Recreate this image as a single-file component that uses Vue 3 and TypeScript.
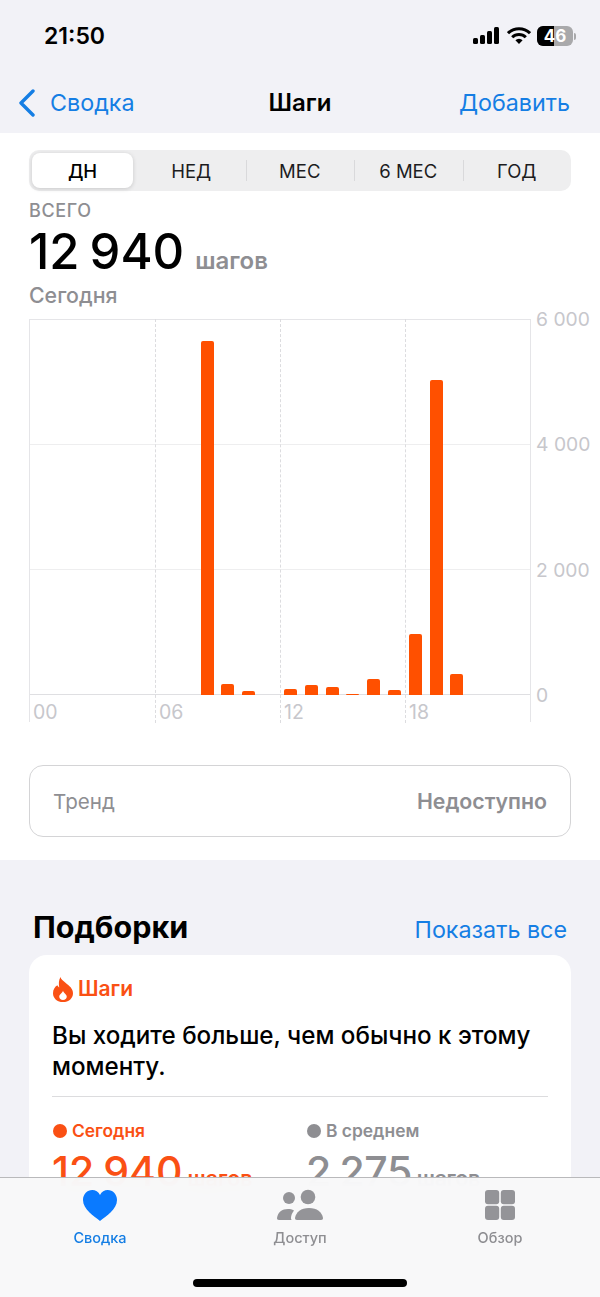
<template>
  <div class="phone">
    <header class="top">
      <div class="status">
        <span class="time">21:50</span>
        <div class="status-icons">
          <svg width="27" height="18" viewBox="0 0 27 18">
            <rect x="0" y="11" width="5" height="6" rx="1.5" />
            <rect x="7" y="8" width="5" height="9" rx="1.5" />
            <rect x="14" y="4" width="5" height="13" rx="1.5" />
            <rect x="21" y="0" width="5" height="17" rx="1.5" />
          </svg>
          <svg class="wifi" width="24" height="18" viewBox="0 0 24 18">
            <path d="M1 6.2a15.6 15.6 0 0 1 22 0" fill="none" stroke="#000" stroke-width="3" />
            <path d="M5.2 10.2a9.6 9.6 0 0 1 13.6 0" fill="none" stroke="#000" stroke-width="3" />
            <path d="M8.4 13.2 12 17l3.600-3.800a5 5 0 0 0-7.200 0z" />
          </svg>
          <div class="battery"><span class="battery-fill"></span><span class="battery-num">46</span></div>
          <span class="battery-cap"></span>
        </div>
      </div>
      <nav class="nav">
        <div class="back">
          <svg width="18" height="28" viewBox="0 0 18 28">
            <path d="M15 2 3 14l12 12" fill="none" stroke="#157ee4" stroke-width="3.400" stroke-linecap="round" stroke-linejoin="round" />
          </svg>
          <span>Сводка</span>
        </div>
        <div class="nav-title">Шаги</div>
        <div class="nav-add">Добавить</div>
      </nav>
    </header>

    <section class="sheet">
      <div class="segments">
        <div
          v-for="(s, i) in segments"
          :key="s"
          class="segment"
          :class="{ active: i === 0, sep: i > 1 }"
        >
          {{ s }}
        </div>
      </div>

      <div class="total-label">ВСЕГО</div>
      <div class="total">
        <span class="total-num">12 940</span>
        <span class="total-unit">шагов</span>
      </div>
      <div class="total-date">Сегодня</div>

      <div class="chart">
        <div class="plot">
          <div class="rows">
            <div class="grid-row"></div>
            <div class="grid-row"></div>
            <div class="grid-row"></div>
          </div>
          <div class="cols">
            <div v-for="h in hours" :key="h" class="col">{{ h }}</div>
          </div>
          <div class="bars">
            <div v-for="(b, i) in bars" :key="i" class="slot">
              <div v-if="b" class="bar" :style="{ height: b + 'px' }"></div>
            </div>
          </div>
        </div>
        <div class="y-axis">
          <span>6 000</span>
          <span>4 000</span>
          <span>2 000</span>
          <span>0</span>
        </div>
      </div>

      <div class="trend">
        <span>Тренд</span>
        <span class="trend-value">Недоступно</span>
      </div>
    </section>

    <section class="picks">
      <div class="picks-head">
        <h2>Подборки</h2>
        <span class="show-all">Показать все</span>
      </div>
      <div class="card">
        <div class="card-title">
          <svg width="20" height="25" viewBox="0 0 16 24" preserveAspectRatio="none">
            <path
              fill-rule="evenodd"
              d="M6 0c.5 2.500 2 3.500 4 5.500 3 3 6 5.500 6 10C16 20.500 12.500 24 8 24S0 20.500 0 15.500C0 12 1.500 9.500 3.500 8c.5 1 .8 1.500 1.500 2C4.500 6.500 4.500 3 6 0zM8 13c0 2-3 3.500-3 6 0 2 1.300 3 3 3s3-1 3-3c0-2.500-3-4-3-6z"
            />
          </svg>
          <span>Шаги</span>
        </div>
        <p class="card-text">Вы ходите больше, чем обычно к этому моменту.</p>
        <div class="compare">
          <div class="metric today">
            <div class="metric-label"><i class="dot"></i>Сегодня</div>
            <div class="metric-value">12 940<small>шагов</small></div>
          </div>
          <div class="metric avg">
            <div class="metric-label"><i class="dot"></i>В среднем</div>
            <div class="metric-value">2 275<small>шагов</small></div>
          </div>
        </div>
      </div>
    </section>

    <footer class="tabbar">
      <div class="tabs">
        <div class="tab current">
          <svg width="36" height="34" viewBox="0 0 36 34">
            <path d="M18 32C12 27 1 20.500 1 11 1 5 5.400 1 10.200 1 13.500 1 16.400 2.800 18 6c1.600-3.200 4.500-5 7.800-5C30.600 1 35 5 35 11c0 9.500-11 16-17 21z" fill="#0a7aff" />
          </svg>
          <span>Сводка</span>
        </div>
        <div class="tab">
          <svg width="46" height="34" viewBox="0 -1 46 34">
            <circle cx="12" cy="8" r="6" />
            <circle cx="31" cy="7" r="7.300" />
            <path d="M2 30c-1.500 0-2-1-2-2C1 22 5 19 11 19c2 0 4 .4 6 1.500C15 23 14 25.500 14 28c0 1 .3 2 1 2z" />
            <path d="M20 30c-1.500 0-2-1-2-2 1-6 6-10 14-10s13 4 14 10c0 1-.5 2-2 2z" />
          </svg>
          <span>Доступ</span>
        </div>
        <div class="tab">
          <svg width="30" height="34" viewBox="0 -1 30 34">
            <rect x="0" y="0" width="14.200" height="14.200" rx="3" />
            <rect x="15.800" y="0" width="14.200" height="14.200" rx="3" />
            <rect x="0" y="15.800" width="14.200" height="14.200" rx="3" />
            <rect x="15.800" y="15.800" width="14.200" height="14.200" rx="3" />
          </svg>
          <span>Обзор</span>
        </div>
      </div>
      <div class="home-bar"></div>
    </footer>
  </div>
</template>

<script setup lang="ts">
const segments = ['ДН', 'НЕД', 'МЕС', '6 МЕС', 'ГОД']
const hours = ['00', '06', '12', '18']

// bar heights in px per hour of the day
const bars: number[] = [
  0, 0, 0, 0, 0, 0, 0, 0, 354, 11, 4, 0, 6, 10, 8, 1, 16, 5, 61, 315, 21, 0, 0, 0,
]
</script>

<style>
html,
body {
  margin: 0;
  background: #f2f2f7;
}
</style>

<style scoped>
.phone {
  position: relative;
  width: 600px;
  height: 1297px;
  overflow: hidden;
  background: #f2f2f7;
  font-family: Inter, "Noto Sans", sans-serif;
  color: #000;
}

.top {
  height: 133px;
}

.status {
  height: 72px;
  box-sizing: border-box;
  padding: 20px 24px 0 44px;
  display: flex;
  justify-content: space-between;
  align-items: flex-start;
}

.time {
  font-size: 23px;
  line-height: 32px;
  font-weight: 600;
}

.status-icons {
  display: flex;
  align-items: center;
  gap: 5px;
  height: 32px;
}

.wifi {
  margin-left: 2px;
}

.battery {
  position: relative;
  width: 36px;
  height: 20px;
  border-radius: 6px;
  overflow: hidden;
  background: #a9a9ab;
  margin-left: 1px;
}

.battery-fill {
  position: absolute;
  left: 0;
  top: 0;
  bottom: 0;
  width: 17px;
  background: #000;
}

.battery-num {
  position: absolute;
  inset: 0;
  text-align: center;
  color: #fff;
  font-size: 17px;
  line-height: 20px;
  font-weight: 700;
}

.battery-cap {
  width: 2px;
  height: 7px;
  margin-left: -4px;
  background: #a9a9ab;
  border-radius: 0 2px 2px 0;
}

.nav {
  height: 61px;
  box-sizing: border-box;
  padding: 0 30px 0 18px;
  display: flex;
  align-items: center;
  justify-content: space-between;
  position: relative;
  font-size: 23.300px;
  color: #157ee4;
}

.back {
  display: flex;
  align-items: center;
  gap: 14px;
}

.nav-title {
  position: absolute;
  left: 0;
  right: 0;
  text-align: center;
  color: #000;
  font-size: 24px;
  font-weight: 600;
  pointer-events: none;
}

.sheet {
  background: #fff;
  height: 727px;
  box-sizing: border-box;
  padding: 17px 29px 0;
}

.segments {
  height: 41px;
  box-sizing: border-box;
  padding: 3px 0 3px 3px;
  border-radius: 10px;
  background: #eeeeef;
  display: grid;
  grid-template-columns: 105px repeat(4, 1fr);
}

.segment {
  position: relative;
  display: flex;
  align-items: center;
  justify-content: center;
  font-size: 18.500px;
  color: #1c1c1e;
}

.segment.sep::before {
  content: "";
  position: absolute;
  left: 0;
  top: 7px;
  bottom: 7px;
  width: 1px;
  background: #d9d9db;
}

.segment.active {
  margin-right: 4px;
  background: #fff;
  border-radius: 8px;
  box-shadow: 0 1px 4px rgba(0, 0, 0, 0.16);
  color: #000;
  font-weight: 500;
}

.total-label {
  margin-top: 10px;
  font-size: 18px;
  letter-spacing: 0.6px;
  line-height: 20px;
  font-weight: 500;
  color: #8e8e92;
}

.total {
  display: flex;
  align-items: baseline;
  height: 52px;
  margin-top: 5px;
}

.total-num {
  font-size: 49px;
  word-spacing: -3px;
  line-height: 52px;
  font-weight: 500;
}

.total-unit {
  margin-left: 11px;
  font-size: 24px;
  font-weight: 600;
  color: #8e8e92;
}

.total-date {
  margin-top: 2px;
  font-size: 21.300px;
  line-height: 30px;
  font-weight: 500;
  color: #8e8e92;
}

.chart {
  margin-top: 9px;
  display: flex;
}

.plot {
  position: relative;
  flex: none;
  width: 502px;
  height: 403px;
  box-sizing: border-box;
  border-left: 1px solid #e5e5e8;
  border-right: 1px solid #e5e5e8;
}

.rows {
  height: 376px;
  border-top: 1px solid #e5e5e8;
  border-bottom: 1px solid #dfdfe2;
  box-sizing: border-box;
  display: flex;
  flex-direction: column;
}

.grid-row {
  flex: 1;
  border-bottom: 1px solid #eeeeef;
}

.grid-row:last-child {
  border-bottom: 0;
}

.cols {
  position: absolute;
  inset: 0;
  display: grid;
  grid-template-columns: repeat(4, 1fr);
}

.col {
  box-sizing: border-box;
  padding: 382px 0 0 3px;
  font-size: 19.500px;
  line-height: 22px;
  color: #c7c7cc;
  border-left: 1px dashed #dcdcdf;
}

.col:first-child {
  border-left: 0;
}

.bars {
  position: absolute;
  left: 0;
  right: 0;
  top: 0;
  height: 376px;
  display: flex;
  align-items: flex-end;
}

.slot {
  flex: 1;
  display: flex;
  justify-content: center;
}

.bar {
  width: 13px;
  background: #ff5000;
  border-radius: 2px 2px 0 0;
}

.y-axis {
  flex: none;
  height: 398px;
  margin-top: -11px;
  padding-left: 5px;
  font-size: 19.300px;
  line-height: 22px;
  color: #c7c7cc;
  display: flex;
  flex-direction: column;
  justify-content: space-between;
  box-sizing: border-box;
  white-space: nowrap;
}

.trend {
  margin-top: 43px;
  height: 72px;
  box-sizing: border-box;
  border: 1.500px solid #d4d4d6;
  border-radius: 14px;
  padding: 0 23px;
  display: flex;
  align-items: center;
  justify-content: space-between;
  font-size: 20.600px;
  color: #8e8e92;
}

.trend-value {
  font-size: 21.300px;
  font-weight: 600;
}

.picks {
  padding: 0 29px;
}

.picks-head {
  display: flex;
  justify-content: space-between;
  align-items: center;
  padding: 38px 4px 0;
  height: 95px;
  box-sizing: border-box;
}

.picks-head h2 {
  margin: 0;
  font-size: 30.500px;
  line-height: 40px;
  font-weight: 700;
}

.show-all {
  padding-top: 6px;
  font-size: 23.300px;
  color: #157ee4;
}

.card {
  background: #fff;
  border-radius: 18px;
  padding: 20px 23px 40px;
  height: 300px;
  box-sizing: border-box;
}

.card-title {
  display: flex;
  align-items: center;
  gap: 5px;
  padding-left: 1px;
  font-size: 21px;
  line-height: 28px;
  font-weight: 600;
  color: #fa5014;
}

.card-title svg {
  fill: #fa5014;
}

.card-text {
  margin: 17px 0 0;
  padding-bottom: 14px;
  border-bottom: 1px solid #dcdcde;
  font-size: 24.200px;
  line-height: 31px;
  font-weight: 500;
}

.compare {
  display: grid;
  grid-template-columns: 254px 1fr;
  margin-top: 21px;
}

.metric-label {
  display: flex;
  align-items: center;
  gap: 5px;
  padding-left: 1px;
  font-size: 17.400px;
  line-height: 26px;
  font-weight: 600;
}

.dot {
  width: 14px;
  height: 14px;
  border-radius: 50%;
  background: currentColor;
}

.metric-value {
  font-size: 41px;
  word-spacing: -2px;
  line-height: 50px;
  font-weight: 500;
  margin-top: 2px;
}

.metric-value small {
  margin-left: 5px;
  font-size: 21.500px;
  font-weight: 600;
}

.today {
  color: #fa5014;
}

.avg {
  color: #8e8e92;
}

.avg .metric-value {
  letter-spacing: -0.4px;
}

.tabbar {
  position: absolute;
  left: 0;
  right: 0;
  bottom: 0;
  height: 120px;
  box-sizing: border-box;
  border-top: 1px solid #b9b9bb;
  background: rgba(248, 248, 249, 0.96);
  backdrop-filter: blur(12px);
}

.tabs {
  display: grid;
  grid-template-columns: repeat(3, 1fr);
  padding-top: 11px;
}

.tab {
  display: flex;
  flex-direction: column;
  align-items: center;
  gap: 5px;
  font-size: 14.500px;
  line-height: 20px;
  font-weight: 500;
  color: #8e8e92;
}

.tab svg {
  fill: #949498;
}

.tab.current {
  color: #157ee4;
}

.home-bar {
  position: absolute;
  left: 193px;
  bottom: 10px;
  width: 214px;
  height: 8px;
  border-radius: 4px;
  background: #000;
}
</style>
